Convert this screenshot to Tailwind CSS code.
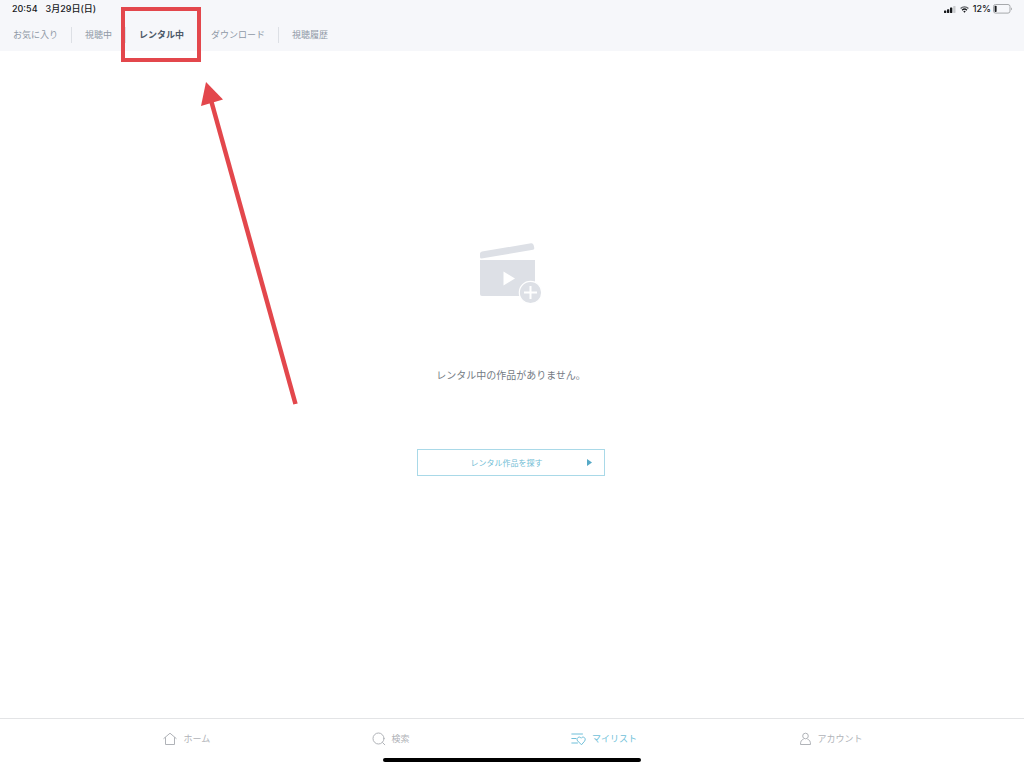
<!DOCTYPE html>
<html lang="ja">
<head>
    <meta charset="UTF-8">
    <meta name="viewport" content="width=device-width, initial-scale=1.0">
    <title>マイリスト</title>
    <script src="https://cdn.jsdelivr.net/npm/@tailwindcss/browser@4"></script>
</head>
<body class="relative flex min-h-screen flex-col bg-white font-['Inter','Noto_Sans_CJK_JP',sans-serif] text-[9px] text-[#8f99a6]">

<header class="bg-[#f6f7fa]">
    <!-- Status bar -->
    <div class="flex h-[18px] items-center justify-between pl-3 pr-[11px] font-medium text-[#17191c]">
        <div class="flex gap-2">
            <span>20:54</span>
            <span>3月29日(日)</span>
        </div>
        <div class="flex items-center gap-1">
            <svg class="h-[7px] w-3" viewBox="0 0 12 7" fill="currentColor">
                <rect x="0" y="4.5" width="2.3" height="2.5" rx=".4"/>
                <rect x="3" y="3.3" width="2.3" height="3.7" rx=".4"/>
                <rect x="6" y="1.5" width="2.3" height="5.5" rx=".4"/>
                <rect x="9.2" y="0" width="2.3" height="7" rx=".4" fill="#c9cbce"/>
            </svg>
            <svg class="h-[7px] w-[9px]" viewBox="0 0 9 7" fill="none" stroke="currentColor" stroke-width="1.3">
                <path d="M.6 2.5a5.6 5.6 0 0 1 7.8 0" stroke="#5b5e62"/>
                <path d="M2.1 4.2a3.4 3.4 0 0 1 4.8 0"/>
                <path d="M3.3 5.4a1.8 1.8 0 0 1 2.4 0L4.5 6.8z" fill="currentColor" stroke="none"/>
            </svg>
            <span>12%</span>
            <svg class="-ml-0.5 h-[10px] w-5" viewBox="0 0 20 10">
                <rect x=".5" y=".5" width="16.5" height="8.6" rx="2" fill="none" stroke="#a7a9ac"/>
                <rect x="1.6" y="1.7" width="2" height="6.2" rx=".7" fill="#17191c"/>
                <path d="M18 3.4c1.3.3 1.3 2.5 0 2.8z" fill="#a7a9ac"/>
            </svg>
        </div>
    </div>

    <!-- Tabs -->
    <nav class="flex h-[33px] items-center divide-x divide-[#dde0e5]">
        <button type="button" class="h-4 px-[13px] leading-4">お気に入り</button>
        <button type="button" class="h-4 px-[13px] leading-4">視聴中</button>
        <button type="button" class="h-4 px-[13px] font-bold leading-4 text-[#4c5968]">レンタル中</button>
        <button type="button" class="h-4 px-[13px] leading-4">ダウンロード</button>
        <button type="button" class="h-4 px-[13px] leading-4">視聴履歴</button>
    </nav>
</header>

<main class="flex flex-1 flex-col items-center pr-0.5 pt-48">
    <svg class="h-[61px] w-[62px]" viewBox="0 0 62 61">
        <path d="M0 11Q-.2 9 2 8.500L51 .3Q53 0 53.600 2L54.300 5Q54.500 6.500 53 6.800L1.500 15.500Q0 15.500 0 14Z" fill="#dde0e6"/>
        <path d="M0 17H55V53H2Q0 53 0 51Z" fill="#dde0e6"/>
        <path d="M23.500 28.500 35 35.500 23.500 42.500Z" fill="#fff"/>
        <circle cx="50.500" cy="49.500" r="11.200" fill="#dde0e6" stroke="#fff" stroke-width="1.200"/>
        <path d="M44 49.500H57M50.500 43V56" fill="none" stroke="#fff" stroke-width="2"/>
    </svg>
    <p class="mt-[63px] text-[10px] leading-4 text-[#747b84]">レンタル中の作品がありません。</p>
    <button type="button" class="mt-[66px] flex h-[27px] w-[188px] items-center border border-[#a9d9e8] pl-2 pr-3 text-[8px] text-[#72bdd5]">
        <span class="flex-1 text-center">レンタル作品を探す</span>
        <svg class="h-[7px] w-[5px]" viewBox="0 0 5 7" fill="#56a9c6"><path d="M0 0 5 3.500 0 7Z"/></svg>
    </button>
</main>

<footer class="border-t border-[#e3e4e6] pb-1.5">
    <nav class="flex h-[39px] items-center justify-evenly pl-0.5 text-[#b0b3b8]">
        <a href="#" class="flex items-center gap-1.5">
            <svg class="h-[14px] w-[14px]" viewBox="0 0 14 14" fill="none" stroke="currentColor" stroke-linejoin="round" stroke-linecap="round">
                <path d="M.8 6.500 7 1.200 13.200 6.500M2.500 5.500V12.500H11.500V5.500"/>
            </svg>
            ホーム
        </a>
        <a href="#" class="flex items-center gap-1.5">
            <svg class="h-[14px] w-[14px]" viewBox="0 0 14 14" fill="none" stroke="currentColor" stroke-linecap="round">
                <circle cx="6.500" cy="6.500" r="5.500"/>
                <path d="M10.600 10.600 12.800 12.800"/>
            </svg>
            検索
        </a>
        <a href="#" class="flex items-center gap-1.5 text-[#6fbfd9]">
            <svg class="h-[14px] w-[15px]" viewBox="0 0 15 14" fill="none" stroke="currentColor" stroke-linejoin="round" stroke-linecap="round">
                <path d="M.8 2H11.500M.8 6.500H5M.8 11H6.500"/>
                <path d="M10.200 12.500 6.600 8.900C4.700 6.600 8.200 3.300 10.200 6.200 12.200 3.300 15.700 6.600 13.800 8.900Z"/>
            </svg>
            マイリスト
        </a>
        <a href="#" class="flex items-center gap-1.5">
            <svg class="h-[14px] w-[13px]" viewBox="0 0 13 14" fill="none" stroke="currentColor" stroke-linejoin="round">
                <circle cx="6.500" cy="4" r="2.800"/>
                <path d="M4.500 7.300C2.500 7.800 1.500 9 1.500 12.500H11.500C11.500 9 10.500 7.800 8.500 7.300"/>
            </svg>
            アカウント
        </a>
    </nav>
    <div class="mx-auto h-1 w-[258px] rounded-full bg-black"></div>
</footer>

<!-- Callout box and arrow -->
<div class="pointer-events-none absolute left-[121px] top-[7px] h-[55px] w-20 border-4 border-[#e3474c]"></div>
<svg class="pointer-events-none absolute left-[200px] top-20 h-[326px] w-[98px]" viewBox="0 0 98 326">
    <path d="M11.500 22 95.500 324" fill="none" stroke="#e3474c" stroke-width="4.500"/>
    <path d="M6 2 23 19.500 1 26Z" fill="#e3474c"/>
</svg>
</body>
</html>
